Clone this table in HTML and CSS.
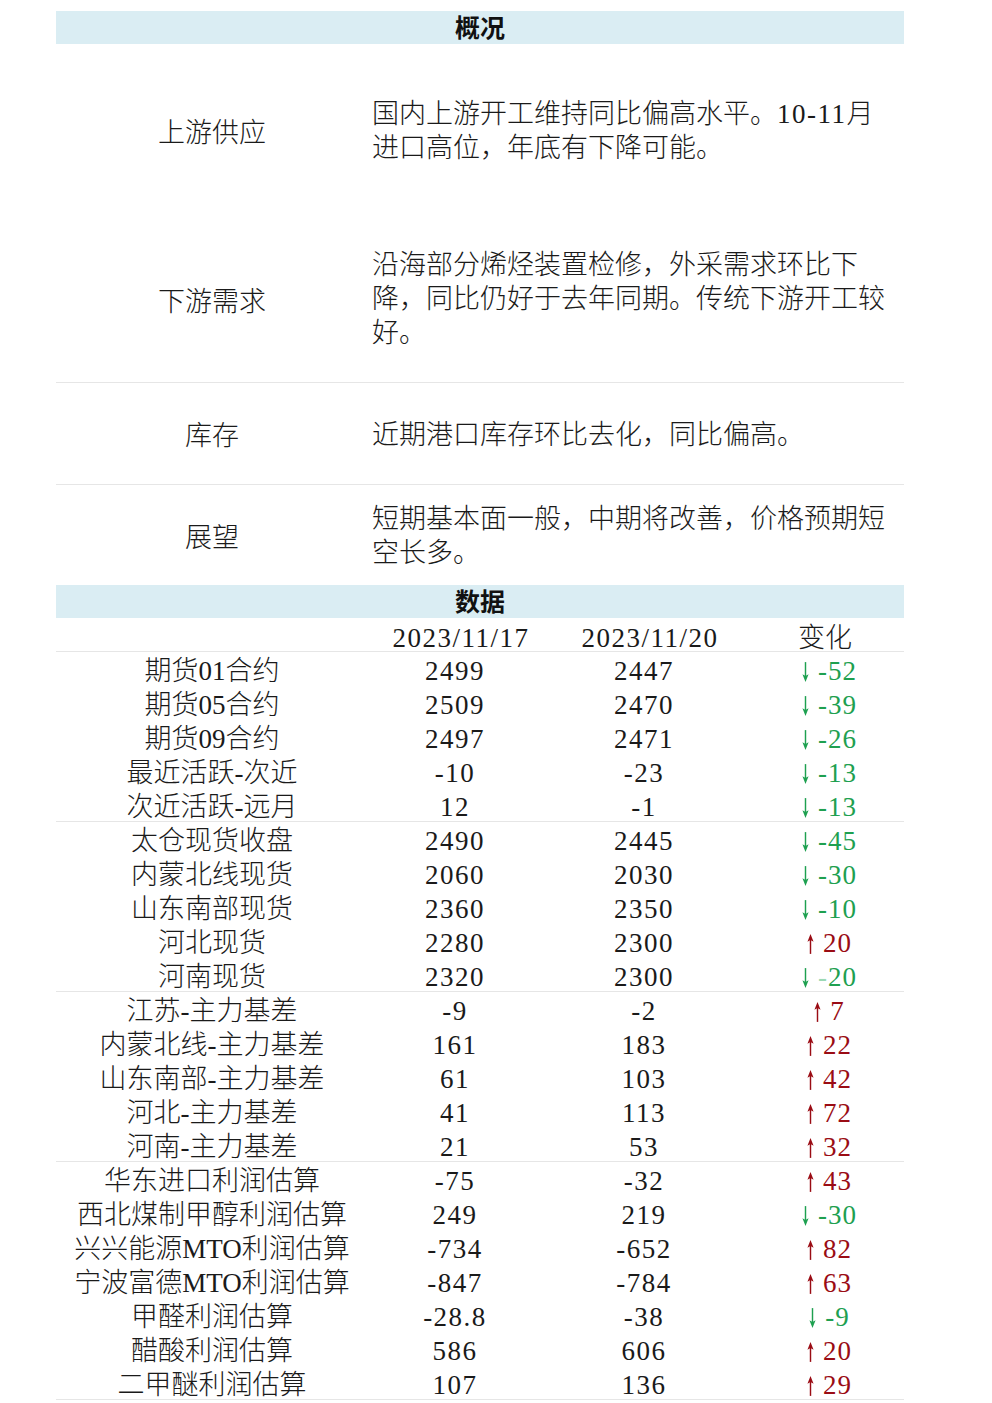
FILE: index.html
```html
<!DOCTYPE html>
<html lang="zh-CN">
<head>
<meta charset="utf-8">
<title>概况 数据</title>
<link rel="stylesheet" href="styles.css">
</head>
<body>
<svg class="defs" width="0" height="0" aria-hidden="true">
  <defs>
    <symbol id="down" viewBox="0 0 10 24">
      <path d="M5 1 V18" stroke="currentColor" stroke-width="1.6" fill="none"/>
      <path d="M1.6 14.5 L5 23 L8.4 14.5 L5 16.5 Z" fill="currentColor"/>
    </symbol>
    <symbol id="up" viewBox="0 0 10 24">
      <path d="M5 6 V23" stroke="currentColor" stroke-width="1.6" fill="none"/>
      <path d="M1.6 9.5 L5 1 L8.4 9.5 L5 7.5 Z" fill="currentColor"/>
    </symbol>
  </defs>
</svg>
<div class="sheet">
  <div class="bar">概况</div>

  <div class="ov-row r1">
    <div class="ov-label">上游供应</div>
    <div class="ov-text">国内上游开工维持同比偏高水平。<span class="num">10-11</span>月<br>进口高位，年底有下降可能。</div>
  </div>
  <div class="ov-row r2 line">
    <div class="ov-label">下游需求</div>
    <div class="ov-text">沿海部分烯烃装置检修，外采需求环比下<br>降，同比仍好于去年同期。传统下游开工较<br>好。</div>
  </div>
  <div class="ov-row r3 line">
    <div class="ov-label">库存</div>
    <div class="ov-text">近期港口库存环比去化，同比偏高。</div>
  </div>
  <div class="ov-row r4">
    <div class="ov-label">展望</div>
    <div class="ov-text">短期基本面一般，中期将改善，价格预期短<br>空长多。</div>
  </div>

  <div class="bar">数据</div>

  <div class="grid head line">
    <div></div><div class="num">2023/11/17</div><div class="num">2023/11/20</div><div>变化</div>
  </div>

  <div class="group line">
    <div class="grid row"><div>期货01合约</div><div>2499</div><div>2447</div><div class="dn"><svg class="ar"><use href="#down"/></svg>-52</div></div>
    <div class="grid row"><div>期货05合约</div><div>2509</div><div>2470</div><div class="dn"><svg class="ar"><use href="#down"/></svg>-39</div></div>
    <div class="grid row"><div>期货09合约</div><div>2497</div><div>2471</div><div class="dn"><svg class="ar"><use href="#down"/></svg>-26</div></div>
    <div class="grid row"><div>最近活跃-次近</div><div>-10</div><div>-23</div><div class="dn"><svg class="ar"><use href="#down"/></svg>-13</div></div>
    <div class="grid row"><div>次近活跃-远月</div><div>12</div><div>-1</div><div class="dn"><svg class="ar"><use href="#down"/></svg>-13</div></div>
  </div>

  <div class="group line">
    <div class="grid row"><div>太仓现货收盘</div><div>2490</div><div>2445</div><div class="dn"><svg class="ar"><use href="#down"/></svg>-45</div></div>
    <div class="grid row"><div>内蒙北线现货</div><div>2060</div><div>2030</div><div class="dn"><svg class="ar"><use href="#down"/></svg>-30</div></div>
    <div class="grid row"><div>山东南部现货</div><div>2360</div><div>2350</div><div class="dn"><svg class="ar"><use href="#down"/></svg>-10</div></div>
    <div class="grid row"><div>河北现货</div><div>2280</div><div>2300</div><div class="up"><svg class="ar"><use href="#up"/></svg>20</div></div>
    <div class="grid row"><div>河南现货</div><div>2320</div><div>2300</div><div class="dn"><svg class="ar"><use href="#down"/></svg><span class="faint">-</span>20</div></div>
  </div>

  <div class="group line">
    <div class="grid row"><div>江苏-主力基差</div><div>-9</div><div>-2</div><div class="up"><svg class="ar"><use href="#up"/></svg>7</div></div>
    <div class="grid row"><div>内蒙北线-主力基差</div><div>161</div><div>183</div><div class="up"><svg class="ar"><use href="#up"/></svg>22</div></div>
    <div class="grid row"><div>山东南部-主力基差</div><div>61</div><div>103</div><div class="up"><svg class="ar"><use href="#up"/></svg>42</div></div>
    <div class="grid row"><div>河北-主力基差</div><div>41</div><div>113</div><div class="up"><svg class="ar"><use href="#up"/></svg>72</div></div>
    <div class="grid row"><div>河南-主力基差</div><div>21</div><div>53</div><div class="up"><svg class="ar"><use href="#up"/></svg>32</div></div>
  </div>

  <div class="group line">
    <div class="grid row"><div>华东进口利润估算</div><div>-75</div><div>-32</div><div class="up"><svg class="ar"><use href="#up"/></svg>43</div></div>
    <div class="grid row"><div>西北煤制甲醇利润估算</div><div>249</div><div>219</div><div class="dn"><svg class="ar"><use href="#down"/></svg>-30</div></div>
    <div class="grid row"><div>兴兴能源MTO利润估算</div><div>-734</div><div>-652</div><div class="up"><svg class="ar"><use href="#up"/></svg>82</div></div>
    <div class="grid row"><div>宁波富德MTO利润估算</div><div>-847</div><div>-784</div><div class="up"><svg class="ar"><use href="#up"/></svg>63</div></div>
    <div class="grid row"><div>甲醛利润估算</div><div>-28.8</div><div>-38</div><div class="dn"><svg class="ar"><use href="#down"/></svg>-9</div></div>
    <div class="grid row"><div>醋酸利润估算</div><div>586</div><div>606</div><div class="up"><svg class="ar"><use href="#up"/></svg>20</div></div>
    <div class="grid row"><div>二甲醚利润估算</div><div>107</div><div>136</div><div class="up"><svg class="ar"><use href="#up"/></svg>29</div></div>
  </div>
</div>
</body>
</html>
```

FILE: styles.css
```css
html, body {
  margin: 0;
  padding: 0;
  background: #ffffff;
}

body {
  font-family: "Liberation Serif", "Noto Sans CJK SC", serif;
  font-size: 27px;
  font-weight: 300;
  color: #1a1a1a;
}

.defs {
  position: absolute;
  width: 0;
  height: 0;
  overflow: hidden;
}

.sheet {
  width: 848px;
  margin: 11px 0 0 56px;
}

.bar {
  height: 33px;
  line-height: 35px;
  background: #daedf3;
  text-align: center;
  font-weight: bold;
  font-size: 25px;
  color: #111;
}

.ov-row {
  display: grid;
  grid-template-columns: 312px 1fr;
  align-items: center;
  box-sizing: border-box;
}

.r1 { height: 172px; }
.r2 { height: 167px; }
.r3 { height: 102px; }
.r4 { height: 100px; }

.line {
  border-bottom: 1px solid #e6e6e6;
}

.ov-label {
  text-align: center;
}

.ov-text {
  padding-left: 4px;
  line-height: 34px;
  white-space: nowrap;
}

.r1 .ov-text { padding-top: 2px; }
.r3 .ov-text { padding-top: 2px; }
.r4 .ov-text { padding-top: 2px; }

.num {
  letter-spacing: 1.5px;
}

.grid {
  display: grid;
  grid-template-columns: 312px 186px 192px 1fr;
  height: 34px;
  line-height: 38px;
  text-align: center;
  white-space: nowrap;
}

.row > div:nth-child(2),
.row > div:nth-child(3) {
  letter-spacing: 1.5px;
  padding-right: 12px;
}

.row > div:nth-child(4) {
  letter-spacing: 1px;
  padding-left: 8px;
}

.head {
  height: 33px;
  line-height: 40px;
}

.group {
  box-sizing: border-box;
}

.group .grid:last-child {
  height: 33px;
}

.dn {
  color: #1ea050;
}

.up {
  color: #9a0c14;
}

.ar {
  width: 9px;
  height: 24px;
  margin-right: 8px;
  vertical-align: -4px;
}

.faint {
  color: #9bd9b4;
}
```
